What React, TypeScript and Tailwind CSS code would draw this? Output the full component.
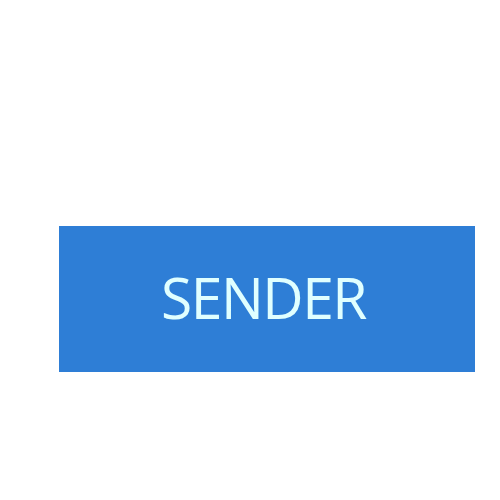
export default function App() {
  return (
    <div className="w-[500px] h-[500px] bg-white pt-[226px] pl-[59px]">
      <button
        type="button"
        className="w-[416px] h-[146px] bg-[#2e7ed6] text-[#e0ffff] flex items-center justify-center text-[57px] tracking-[-1.5px] leading-none pb-[4px] pr-[7px]"
        style={{ fontFamily: '"Open Sans", sans-serif' }}
      >
        SENDER
      </button>
    </div>
  );
}
